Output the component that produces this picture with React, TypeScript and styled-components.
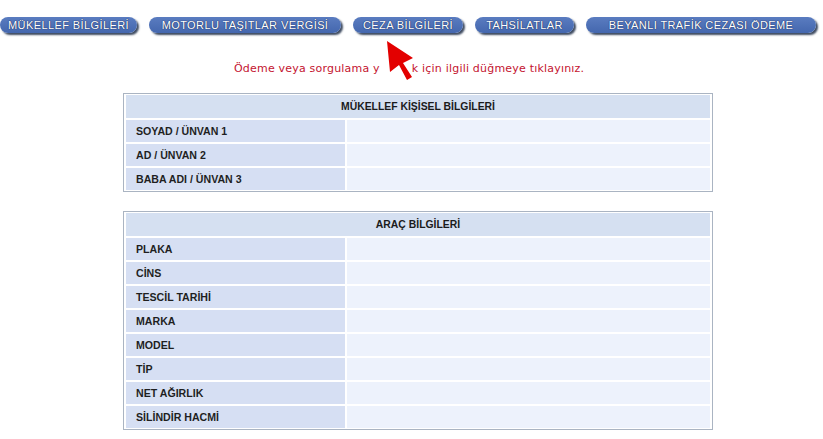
import React, { FC } from 'react';
import styled, { createGlobalStyle } from 'styled-components';

const GlobalStyle = createGlobalStyle`
  html, body {
    margin: 0;
    padding: 0;
    background: #fff;
    font-family: "Liberation Sans", Arial, sans-serif;
  }
`;

const tabs = [
  { title: 'MÜKELLEF BİLGİLERİ', width: 137 },
  { title: 'MOTORLU TAŞITLAR VERGİSİ', width: 192 },
  { title: 'CEZA BİLGİLERİ', width: 110 },
  { title: 'TAHSİLATLAR', width: 99 },
  { title: 'BEYANLI TRAFİK CEZASI ÖDEME', width: 230 },
];

const App: FC = () => (
  <Page>
    <GlobalStyle />
    <Tabs>
      {tabs.map(tab => (
        <Tab key={tab.title} $width={tab.width}>{tab.title}</Tab>
      ))}
    </Tabs>

    <Notice>
      Ödeme veya sorgulama yapmak için ilgili düğmeye tıklayınız.
      <Arrow viewBox="0 0 38 50" aria-hidden="true">
        <rect x="0" y="23" width="32" height="13" fill="#fff" />
        <polygon
          points="7,3 33,20 23,25 32,39 27,42 19,27 10,34"
          fill="#e30000"
        />
      </Arrow>
    </Notice>

    <Panel title="MÜKELLEF KİŞİSEL BİLGİLERİ" rows={['SOYAD / ÜNVAN 1', 'AD / ÜNVAN 2', 'BABA ADI / ÜNVAN 3']} />
    <Panel
      title="ARAÇ BİLGİLERİ"
      rows={['PLAKA', 'CİNS', 'TESCİL TARİHİ', 'MARKA', 'MODEL', 'TİP', 'NET AĞIRLIK', 'SİLİNDİR HACMİ']}
    />
  </Page>
);

interface IPanel {
  title: string
  rows: string[]
}

const Panel: FC<IPanel> = ({ title, rows }) => (
  <PanelBox>
    <PanelTitle>{title}</PanelTitle>
    {rows.map(row => (
      <Row key={row}>
        <Label>{row}</Label>
        <Value />
      </Row>
    ))}
  </PanelBox>
);

const Page = styled.div`
    width: 823px;
    height: 439px;
    overflow: hidden;
    padding-top: 17px;
    box-sizing: border-box;
  `,
  Tabs = styled.div`
    display: flex;
    gap: 12px;
    height: 17px;
  `,
  Tab = styled.div<{ $width: number }>`
    width: ${props => props.$width}px;
    height: 16px;
    flex: none;
    display: flex;
    justify-content: center;
    align-items: center;
    border-radius: 8px;
    background: linear-gradient(#5a7cc0, #4467ae);
    box-shadow: 2px 2px 2px #3d4a60;
    color: #fff;
    font-size: 11px;
    letter-spacing: 0.4px;
    white-space: nowrap;
    text-shadow: 0 0 1px #1c2f60, 0 0 1px #1c2f60;
  `,
  Notice = styled.div`
    position: relative;
    width: 350px;
    margin: 9px 0 0 234px;
    height: 20px;
    padding-top: 19px;
    color: #c4142f;
    font-family: "DejaVu Sans", Verdana, sans-serif;
    font-size: 11px;
    letter-spacing: 0.2px;
    line-height: 13px;
    white-space: nowrap;
  `,
  Arrow = styled.svg`
    position: absolute;
    left: 146px;
    top: -5px;
    width: 38px;
    height: 50px;
  `,
  PanelBox = styled.section`
    box-sizing: border-box;
    width: 590px;
    margin: 11px 0 19px 123px;
    padding: 1px 2px 1px 2px;
    border: 1px solid #aab4c2;
    display: flex;
    flex-direction: column;
    gap: 2px;
    & + & {
      margin-top: 0;
    }
  `,
  PanelTitle = styled.div`
    height: 23px;
    display: flex;
    justify-content: center;
    align-items: center;
    background: #d5e0f1;
    color: #1b1b1b;
    font-size: 10.4px;
    font-weight: 700;
  `,
  Row = styled.div`
    display: flex;
    gap: 2px;
    height: 22px;
  `,
  Label = styled.div`
    width: 219px;
    flex: none;
    box-sizing: border-box;
    padding-left: 10px;
    display: flex;
    align-items: center;
    background: #d6dff3;
    color: #1f1f1f;
    font-size: 10.6px;
    font-weight: 700;
  `,
  Value = styled.div`
    flex: 1;
    background: #edf2fc;
  `;

export default App;
